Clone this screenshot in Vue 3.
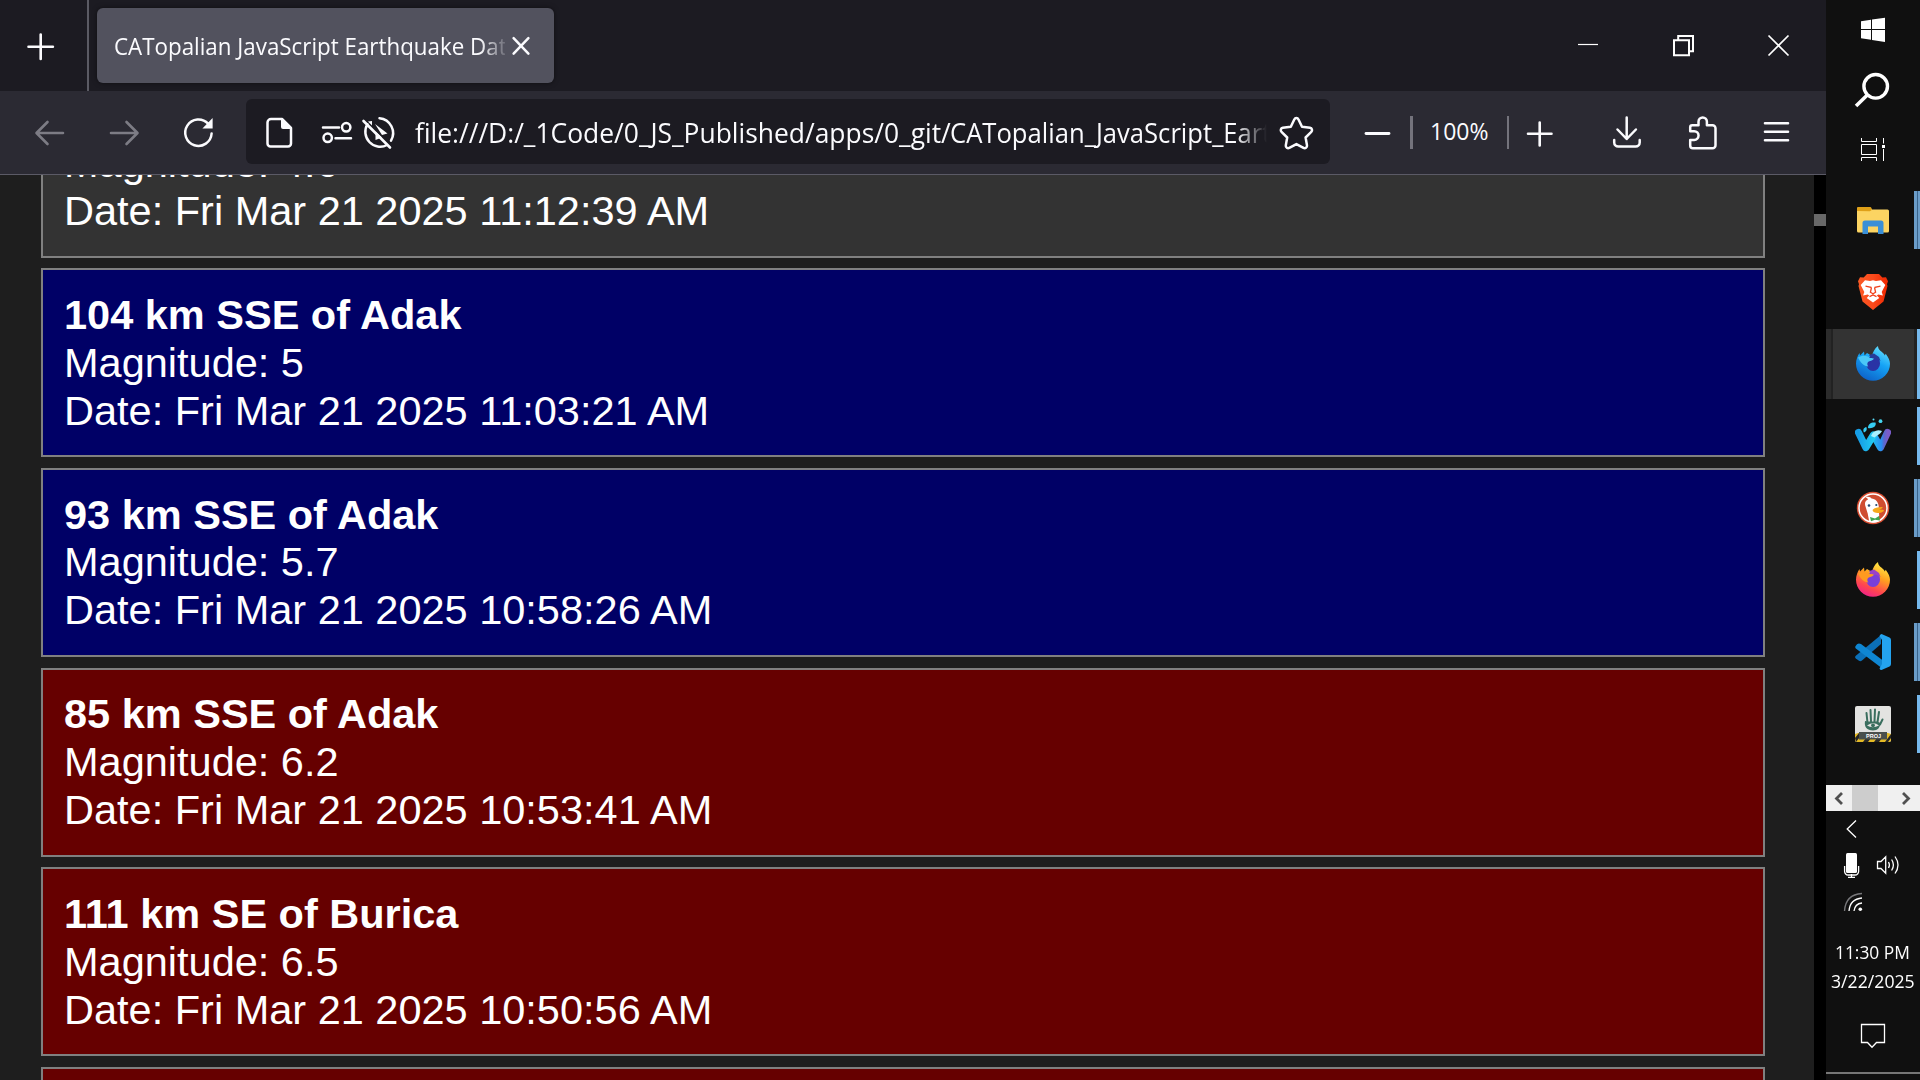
<script setup>
const quakes = [
  { place: '98 km SSE of Adak', mag: '4.6', date: 'Fri Mar 21 2025 11:12:39 AM', tone: 'low' },
  { place: '104 km SSE of Adak', mag: '5', date: 'Fri Mar 21 2025 11:03:21 AM', tone: 'mid' },
  { place: '93 km SSE of Adak', mag: '5.7', date: 'Fri Mar 21 2025 10:58:26 AM', tone: 'mid' },
  { place: '85 km SSE of Adak', mag: '6.2', date: 'Fri Mar 21 2025 10:53:41 AM', tone: 'high' },
  { place: '111 km SE of Burica', mag: '6.5', date: 'Fri Mar 21 2025 10:50:56 AM', tone: 'high' },
  { place: '', mag: '', date: '', tone: 'high' },
]
const apps = [
  { id: 'folder', run: 'many' },
  { id: 'brave', run: 'none' },
  { id: 'foxdev', run: 'active' },
  { id: 'waterfox', run: 'one' },
  { id: 'duck', run: 'many' },
  { id: 'firefox', run: 'one' },
  { id: 'vscode', run: 'many' },
  { id: 'proj', run: 'one' },
]
</script>

<template>
  <div class="screen">
    <div class="browser">
      <header class="tabs">
        <svg class="newtab" width="87" height="91" viewBox="0 0 87 91"><path d="M40.7 34.5v24.4M28.5 46.7h24.4" stroke="#fbfbfe" stroke-width="2.6" stroke-linecap="round" /></svg>
        <div class="tab">
          <div class="tab-title"><span>CATopalian JavaScript Earthquake Data</span></div>
          <svg width="20" height="20" viewBox="0 0 20 20"><path d="M2.6 2.2l14.800 15.400M17.400 2.200L2.600 17.600" stroke="#fbfbfe" stroke-width="2.5" stroke-linecap="round" /></svg>
        </div>
        <svg class="winctl" width="236" height="91" viewBox="1570 0 236 91" fill="none" stroke="#fff">
          <path d="M1578 44.5h20" stroke-width="1.2" />
          <path d="M1674 40.2h15v15h-15zM1678.2 40v-4h14.8v15.3h-4" stroke-width="2" />
          <path d="M1768.500 35.500l20 20M1788.500 35.500l-20 20" stroke-width="1.7" />
        </svg>
      </header>

      <nav class="toolbar">
        <svg class="dim" width="40" height="82" viewBox="30 91 40 82"><path d="M63 133H37M47.500 122L36.500 133l11 11" /></svg>
        <svg class="dim fwd" width="40" height="82" viewBox="105 91 40 82"><path d="M111 133h26M126.500 122l11 11-11 11" /></svg>
        <svg class="ic reload" width="40" height="82" viewBox="178 91 40 82"><path d="M211.600 133.500a13.200 13.200 0 1 1-3.500-9.800" /><path d="M212.600 118v10.600h-10.200z" fill="#fbfbfe" stroke="none" /></svg>
        <div class="url">
          <svg class="ic" width="160" height="65" viewBox="246 99 160 65">
            <path d="M267.500 122.500a3.500 3.500 0 0 1 3.500-3.500h11l9 9v15.500a3 3 0 0 1-3 3h-17.500a3 3 0 0 1-3-3z" />
            <path d="M281 118l11 11h-9a2 2 0 0 1-2-2z" fill="#fbfbfe" stroke="none" />
            <path d="M323 127.500h16M335.500 138.200h15.500" />
            <circle cx="346.200" cy="127.300" r="4.200" /><circle cx="327.700" cy="137.800" r="4.200" />
            <path d="M379.500 118.200a15 15 0 0 1 11.500 22.500M387 145a14.800 14.800 0 0 1-19.500-20.800" />
            <path d="M363.500 121l26.500 26.500" stroke-width="2.600" />
            <path d="M368 121.500l4-.5v4.500zM375 124l12.500 9.500-5.500 1.500zM375.500 131.500l6.500 6-6.500 2.500z" fill="#fbfbfe" stroke="none" />
          </svg>
          <div class="url-text"><span class="path">file:///D:/_1Code/0_JS_Published/apps/0_git/</span><span class="leaf">CATopalian_JavaScript_Earth</span></div>
          <svg class="ic star" width="40" height="65" viewBox="1276 99 40 65"><path d="M1294.300 119.500c.9-1.900 3.300-1.900 4.200 0l3.500 7.200 8 1.100c2 .3 2.700 2.700 1.300 4.100l-5.700 5.600 1.400 7.900c.3 2-1.800 3.400-3.500 2.500l-7.100-3.800-7.100 3.800c-1.700.9-3.800-.5-3.500-2.500l1.400-7.900-5.700-5.600c-1.400-1.400-.7-3.800 1.300-4.100l8-1.100z" /></svg>
        </div>
        <svg class="ic" width="95" height="82" viewBox="1330 91 95 82"><path d="M1366 133.500h23" stroke-width="2.800" /><path d="M1411.500 116v33" stroke="#74737c" stroke-width="3" stroke-linecap="butt" /></svg>
        <div class="zoom"><span>100%</span></div>
        <svg class="ic" width="331" height="82" viewBox="1495 91 331 82">
          <path d="M1508 116v33" stroke="#74737c" stroke-width="2" stroke-linecap="butt" />
          <path d="M1539.700 122.500v23M1528 133.700h23.500" stroke-width="2.600" />
          <path d="M1626.700 117.500v21M1617.500 129.500l9.200 9.500 9.200-9.500M1614.200 140v2.500a4 4 0 0 0 4 4h17.500a4 4 0 0 0 4-4V140" />
          <path d="M1690.200 131.200v-4a2 2 0 0 1 2-2h6.300v-3.500a4.200 4.200 0 0 1 8.400 0v3.500h5.600a3 3 0 0 1 3 3v17a3 3 0 0 1-3 3h-19.500a2.800 2.800 0 0 1-2.800-2.800v-5.500h4a4.300 4.300 0 0 0 0-8.700z" />
          <path d="M1765 123.300h23M1765 131.800h23M1765 140.300h23" stroke-width="2.600" />
        </svg>
      </nav>

      <main class="page">
        <section class="list">
          <article v-for="(q, i) in quakes" :key="i" class="card" :class="q.tone">
            <template v-if="q.place">
              <b>{{ q.place }}</b>
              <div>Magnitude: {{ q.mag }}</div>
              <div>Date: {{ q.date }}</div>
            </template>
          </article>
        </section>
        <div class="scroll"><i></i></div>
      </main>
    </div>

    <aside class="taskbar">
      <svg width="94" height="184" viewBox="1826 0 94 184" fill="none" stroke="#fff">
        <path d="M1861 21.300l10-1.600V29h-10zM1872 19.500l13-1.700V29h-13zM1861 30h10v9.700l-10-1.400zM1872 30h13v12l-13-1.900z" fill="#fff" stroke="none" />
        <circle cx="1875.700" cy="86.300" r="11.800" stroke-width="3.400" />
        <path d="M1866.800 95.500l-9.500 9.200" stroke-width="3.600" stroke-linecap="square" />
        <path d="M1861.500 144.500h15v10h-15zM1861.500 138v3.500h15V138M1861.500 161v-3.500h15v3.500M1883.500 138v5.500M1883.500 149v12" stroke-width="1" />
        <rect x="1882" y="145" width="3" height="3" fill="#fff" stroke="none" />
      </svg>

      <div v-for="a in apps" :key="a.id" class="app" :class="a.run">
        <svg v-if="a.id === 'folder'" width="36" height="36" viewBox="0 0 36 36">
          <path d="M2 6.500a1.500 1.500 0 0 1 1.500-1.500h11.500l2 2.500H32.500a1.500 1.500 0 0 1 1.500 1.500V29a1.500 1.500 0 0 1-1.500 1.500H3.500A1.500 1.500 0 0 1 2 29z" fill="#fcd462" />
          <path d="M2 9V6.500A1.500 1.500 0 0 1 3.500 5H15q1.500 0 1.700 2t-2 2.200z" fill="#dfa018" />
          <path d="M7.500 32V21a2.500 2.500 0 0 1 2.500-2.500h16a2.500 2.500 0 0 1 2.500 2.500v11h-5.500v-7.500h-10V32z" fill="#3a8fd6" />
        </svg>
        <svg v-else-if="a.id === 'brave'" width="36" height="36" viewBox="0 0 36 36">
          <defs><linearGradient id="br"><stop offset="0" stop-color="#fb5a24" /><stop offset=".5" stop-color="#fb4a1c" /><stop offset="1" stop-color="#ef2700" /></linearGradient></defs>
          <path d="M12 0h12l3.300 3.500 3.700-.3 2 4-1 3 .5 1.800-4 15.500L18 36 7.500 27.500 3.500 12l.5-1.800-1-3 2-4 3.700.3z" fill="url(#br)" />
          <path d="M10 6.200l5 .8 3-.8 3 .8 5-.8 4.300 4.900-3.600 7 1.200 3.500-4.600-1-1.500 1 2.500 2.500-6.300 4.500-6.300-4.500 2.500-2.500-1.500-1-4.600 1 1.200-3.500-3.600-7z" fill="#fff" />
          <path d="M10.500 12.200l5.500 1.100.3 1.200-.9 3.800 2.600 1.500 2.600-1.500-.9-3.800.3-1.200 5.500-1.100M14.500 22.600l3.500-1.600 3.500 1.600" fill="none" stroke="#f0401b" stroke-width="1.300" />
        </svg>
        <svg v-else-if="a.id === 'foxdev' || a.id === 'firefox'" width="36" height="36" viewBox="0 0 36 36">
          <defs>
            <linearGradient id="fd" x1=".8" y1="0" x2=".3" y2="1"><stop offset="0" stop-color="#6be4ff" /><stop offset=".45" stop-color="#15a3f5" /><stop offset="1" stop-color="#0d61c8" /></linearGradient>
            <linearGradient id="ff" x1=".75" y1="0" x2=".3" y2="1"><stop offset="0" stop-color="#fff24a" /><stop offset=".4" stop-color="#ffa01f" /><stop offset=".75" stop-color="#ff4550" /><stop offset="1" stop-color="#f0208c" /></linearGradient>
          </defs>
          <path d="M17 10c1-4 2.500-7.500 6-10 0 4 3.500 5 6 8l.8 1.600.9-1.800c2.800 4 4.300 7 4.300 9.900A17 17 0 0 1 1 17.700C1 13.500 2.500 10 4.500 7L5 9.500l4-4 .5 4 2.500-2.500z" :fill="a.id === 'foxdev' ? 'url(#fd)' : 'url(#ff)'" />
          <ellipse cx="18" cy="17.500" rx="7" ry="7.600" :fill="a.id === 'foxdev' ? '#2a33a5' : '#7a3fd8'" />
          <path d="M14 9l5-1.500 5 3.500 1.500 4-4-2-5-.5z" :fill="a.id === 'foxdev' ? '#263c9b' : '#9a42c8'" />
          <path d="M3 11.500c4-2.500 9-2.500 12 .5 2 0 3.500.2 4 .8-1.500 2-4.300 2-6 3.200-1.200 1.500-.6 3.300.3 4.500-4.300-.5-7.500-3-10.300-9z" :fill="a.id === 'foxdev' ? '#4bc8f8' : '#ff9a20'" />
        </svg>
        <svg v-else-if="a.id === 'waterfox'" width="36" height="36" viewBox="0 -2 36 36" fill="none" stroke-linecap="round" stroke-linejoin="round">
          <defs>
            <linearGradient id="wf1"><stop offset="0" stop-color="#169de5" /><stop offset="1" stop-color="#22c9f2" /></linearGradient>
            <linearGradient id="wf2"><stop offset="0" stop-color="#22b5f2" /><stop offset=".55" stop-color="#2b8df0" /><stop offset=".75" stop-color="#5a68cc" /><stop offset="1" stop-color="#7a5cc9" /></linearGradient>
          </defs>
          <path d="M19 16l6.500 11.500L32.500 12.500" stroke="url(#wf2)" stroke-width="7.200" />
          <path d="M3.500 12.500l7.300 15L18.500 15" stroke="url(#wf1)" stroke-width="7.200" />
          <path d="M16 16c2-5 6-7 11-5-2 3.500-5 4-7.500 6.500z" fill="#a9f0ff" />
          <path d="M9 12.500c-1.500-3 0-5 2.300-5.500C12.500 9.500 11.500 11.500 9 12.500zM13 8c0-4 3-6 7.500-5.500C22 6.500 17 9 13 8z" fill="#36cdf3" />
          <circle cx="18.500" cy="-.5" r="1" fill="#5adcf8" /><circle cx="25.500" cy="1.200" r="1.900" fill="#45d4ef" />
        </svg>
        <svg v-else-if="a.id === 'duck'" width="36" height="36" viewBox="0 0 36 36">
          <circle cx="18" cy="18" r="16.200" fill="#d94f32" /><circle cx="18" cy="18" r="14" fill="#cf4d31" stroke="#fff" stroke-width="1.500" />
          <path d="M13 9.500c-.5-1.500-2-2-2.500-2.300 3-1 5 0 6 1.400 4 .4 6.500 3 7.200 7.400l.5 9.500-1 6.300q-5 1.500-9-.3l-1.500-8-2.500-8q-1-4.500 2.800-6z" fill="#fff" />
          <path d="M17.500 20c2-2.500 5-2.600 9.300-3 1.800.2 1 1.500-3 2.500l4.200.2c1.800.2 1 2.500-3.500 3.200-3 .4-6.500-.1-7-2.900z" fill="#f6a91b" />
          <circle cx="14" cy="15.500" r="1.300" fill="#244a72" /><circle cx="21.300" cy="15" r="1.100" fill="#244a72" />
          <path d="M15 27l5 1.500 4-2.500 1 4.500-5-.8-4 1.500z" fill="#3fa650" />
        </svg>
        <svg v-else-if="a.id === 'vscode'" width="36" height="36" viewBox="0 0 36 36">
          <path d="M26 1v9L7 26.500q-1.500 1.300-3 .3L.8 24.400q-1.500-1.300 0-2.600z" fill="#0b70b8" />
          <path d="M2 10.200q1.800-1.500 4-.2L28 26.500V35L.8 14.600q-1.200-1.700 0-2.900z" fill="#0f86d2" />
          <path d="M26.500 0L34.500 3.500Q36 4.300 36 6v24q0 1.700-1.500 2.500L26.500 36q-1.500 0-2-1.500L27 30V6l-2.500-4Q25 .5 26.500 0z" fill="#24a3ef" />
        </svg>
        <svg v-else width="36" height="36" viewBox="0 0 36 36">
          <rect width="36" height="36" rx="2" fill="#e3e3e1" />
          <path d="M12.500 17L11.500 7M16 15.500L15.500 4M19.500 15.500L20 3.500M22.500 16L24 6M25 18.500l2.500-5" stroke="#3a6e5e" stroke-width="2" stroke-linecap="round" />
          <path d="M10 15c-1 6 2 9.500 8 9.500 5 0 7-3 7.500-7.500L22 15.500h-9z" fill="#3a6e5e" />
          <path d="M12 19.500q6.500-4.500 12 0-6.500 3.500-12 0z" fill="#e3e3e1" /><circle cx="18" cy="19.300" r="1.900" fill="#3a6e5e" />
          <path d="M0 28l3-1h30l3 1v6a2 2 0 0 1-2 2H2a2 2 0 0 1-2-2z" fill="#e5ba25" />
          <path d="M0 32l4-5h4l-7 9zM8 36l3-4h5l-3 4zM19 36l3-4h5l-3 4zM30 36l6-8v4l-3 4z" fill="#262626" />
          <rect x="4" y="26" width="28" height="7.500" fill="#4a504d" />
          <text x="18.500" y="32" text-anchor="middle" font-family="Liberation Sans, sans-serif" font-weight="bold" font-size="5.500" fill="#fff">PROJ</text>
        </svg>
        <i></i>
      </div>

      <div class="hbar">
        <svg width="94" height="26" viewBox="1826 785 94 26"><path d="M1852 785h26v26h-26z" fill="#cdcdcd" /><path d="M1842 793l-5.500 5.500 5.500 5.500M1903 793l5.500 5.500-5.500 5.500" fill="none" stroke="#505050" stroke-width="2.800" /></svg>
      </div>
      <svg class="tray" width="94" height="119" viewBox="1826 811 94 119" fill="none" stroke="#fff" stroke-width="1.300">
        <path d="M1856 820.500l-8.800 8.500 8.800 8.500" />
        <rect x="1846" y="853" width="11" height="20" rx="1.500" fill="#fff" stroke="none" />
        <path d="M1844.600 866v5.500a3.500 3.500 0 0 0 3.500 3.500h7a3.500 3.500 0 0 0 3.500-3.500V866M1851.500 874v3M1848 877.300h7" />
        <path d="M1877.500 861.500h3.500l4.700-4.700v16.400l-4.700-4.700h-3.500zM1888.500 862q1.800 3 0 6M1891.600 859.500q3.600 5.500 0 11M1895 856.500q6 8.500 0 17" />
        <path d="M1844.500 911q1-16.500 17.500-17.500" stroke="#77777a" /><path d="M1849 911q1-12 13-13M1854 911q.8-7.200 8-8" />
        <circle cx="1860.300" cy="909.300" r="1.800" fill="#fff" stroke="none" />
      </svg>
      <div class="clock"><span class="time">11:30 PM</span><span class="day">3/22/2025</span></div>
      <svg class="note" width="94" height="60" viewBox="1826 1012 94 60" fill="none" stroke="#fff" stroke-width="1.300"><path d="M1861.500 1024.500h23v18h-8l-4.500 4.700-4.500-4.700h-6z" /></svg>
      <div class="edge"></div>
    </aside>
  </div>
</template>

<style>
html, body { margin: 0; background: #000; overflow: hidden; }
</style>

<style scoped>
.screen { width: 1920px; height: 1080px; display: flex; overflow: hidden; background: #101010; }
svg { display: block; flex: none; }
.browser { width: 1826px; height: 1080px; display: flex; flex-direction: column; flex: none; font-family: "Open Sans", "Noto Sans", sans-serif; color: #fbfbfe; }
.tabs { height: 91px; flex: none; display: flex; background: #1c1b22; }
.newtab { border-right: 2px solid #5b5b64; }
.tab { margin: 8px 0 0 8px; width: 457px; height: 75px; background: #52525e; border-radius: 6px; display: flex; align-items: center; box-shadow: 0 0 5px rgba(0, 0, 0, .5); }
.tab svg { margin: 0 0 0 6px; }
.tab-title { margin-left: 17px; width: 391px; height: 40px; overflow: hidden; white-space: nowrap; font-size: 23px; line-height: 40px; mask-image: linear-gradient(to right, #000 366px, transparent 396px); }
.tab-title span, .url-text span, .zoom span, .clock span { display: inline-block; transform-origin: 0 50%; transform: scaleX(.972); }
.winctl { margin-left: auto; margin-right: 20px; }
.toolbar { height: 83px; flex: none; display: flex; padding-left: 30px; background: #2b2a33; border-bottom: 1px solid #5b5a66; }
.dim { fill: none; stroke: #7d7c85; stroke-width: 2.600; stroke-linecap: round; stroke-linejoin: round; }
.ic { fill: none; stroke: #fbfbfe; stroke-width: 2.500; stroke-linecap: round; stroke-linejoin: round; }
.fwd { margin-left: 35px; }
.reload { margin-left: 33px; }
.url { margin: 8px 0 0 28px; width: 1084px; height: 65px; background: #1c1b22; border-radius: 6px; display: flex; flex: none; }
.url-text { margin-left: 9px; width: 853px; height: 65px; overflow: hidden; white-space: nowrap; font-size: 26.500px; line-height: 69px; mask-image: linear-gradient(to right, #000 821px, transparent 852px); }
.url-text .path { transform: scaleX(.997); }
.url-text .leaf { margin-left: -2px; transform: scaleX(.967); }
.star { margin-left: 8px; }
.zoom { width: 65px; margin-left: 5px; margin-right: 0; font-size: 23px; line-height: 81px; white-space: nowrap; }
.zoom span { transform: scaleX(1); }
.page { flex: 1; min-height: 0; display: flex; overflow: hidden; background: #1e1e1e; }
.list { margin-top: -106.470px; margin-left: 41px; width: 1724px; flex: none; font: 41.500px/47.900px "Liberation Sans", Arial, sans-serif; color: #fff; }
.card { box-sizing: border-box; height: 189.300px; margin-bottom: 10.370px; padding: 20.700px 20px 0 21px; border: 2px solid #808080; white-space: nowrap; }
.card b { display: block; }
.low { background: #333; }
.mid { background: #006; }
.high { background: #600; }
.scroll { margin-left: auto; width: 12px; background: #000; padding-top: 39px; }
.scroll i { display: block; height: 12px; background: #686868; }
.taskbar { width: 94px; height: 1080px; display: flex; flex-direction: column; background: #101010; color: #fff; }
.app { height: 72px; flex: none; display: flex; align-items: center; box-sizing: border-box; padding-left: 29px; }
.app i { margin-left: auto; width: 3px; height: 58px; background: #76b9ed; }
.many i { width: 6px; background: linear-gradient(to right, #6a9cc8 0 3px, #38628a 3px 4px, #6a9cc8 4px); }
.none i { background: none; }
.active { background: linear-gradient(to right, #2b2b2b 0 5px, #222 5px 7px, #333 7px 88px, #222 88px); background-size: 100% 70px; background-position: 0 1px; background-repeat: no-repeat; }
.active i { height: 70px; }
.hbar { margin-top: 25px; height: 26px; flex: none; background: #f0f0f0; }
.clock { height: 82px; flex: none; display: flex; flex-direction: column; font: 17.500px/29px "Open Sans", "Noto Sans", sans-serif; padding-top: 8px; box-sizing: border-box; white-space: nowrap; }
.clock .time { margin: 0 0 0 9px; transform: scaleX(.993); }
.clock .day { margin: 0 0 0 5px; transform: scaleX(1.010); }
.edge { height: 2px; background: #777; flex: none; }
</style>
